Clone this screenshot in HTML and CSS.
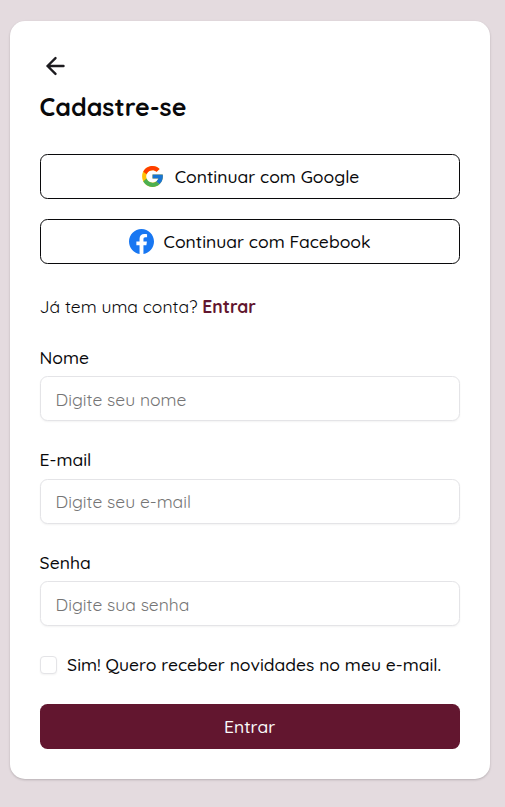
FILE: index.html
```
<!DOCTYPE html>
<html lang="pt-BR">
<head>
<meta charset="utf-8">
<meta name="viewport" content="width=device-width, initial-scale=1">
<title>Cadastre-se</title>
<link rel="stylesheet" href="styles.css">
</head>
<body>
<main class="card">
  <button class="back" type="button" aria-label="Voltar">
    <svg width="24" height="24" viewBox="0 0 24 24" fill="none" stroke="#1c1b1f" stroke-width="2.400" stroke-linecap="round" stroke-linejoin="round"><path d="M20.500 12H4.500M12.500 4.100L4.500 12l8 7.900"/></svg>
  </button>
  <h1 class="title">Cadastre-se</h1>
  <div class="social">
    <button class="social-btn" type="button">
      <svg width="25" height="25" viewBox="0 0 48 48"><path fill="#FFC107" d="M43.611 20.083H42V20H24v8h11.303C33.654 32.657 29.223 36 24 36c-6.627 0-12-5.373-12-12s5.373-12 12-12c3.059 0 5.842 1.154 7.961 3.039l5.657-5.657C34.046 6.053 29.268 4 24 4 12.955 4 4 12.955 4 24s8.955 20 20 20 20-8.955 20-20c0-1.341-.138-2.650-.389-3.917z"/><path fill="#FF3D00" d="M6.306 14.691l6.571 4.819C14.655 15.108 18.961 12 24 12c3.059 0 5.842 1.154 7.961 3.039l5.657-5.657C34.046 6.053 29.268 4 24 4 16.318 4 9.656 8.337 6.306 14.691z"/><path fill="#4CAF50" d="M24 44c5.166 0 9.860-1.977 13.409-5.192l-6.190-5.238C29.211 35.091 26.715 36 24 36c-5.202 0-9.619-3.317-11.283-7.946l-6.522 5.025C9.505 39.556 16.227 44 24 44z"/><path fill="#1976D2" d="M43.611 20.083H42V20H24v8h11.303c-.792 2.237-2.231 4.166-4.087 5.571l6.193 5.238C36.971 39.205 44 34 44 24c0-1.341-.138-2.650-.389-3.917z"/></svg>
      <span>Continuar com Google</span>
    </button>
    <button class="social-btn" type="button">
      <svg width="25" height="25" viewBox="0 0 24 24"><path fill="#1877F2" d="M24 12.073C24 5.405 18.627 0 12 0S0 5.405 0 12.073C0 18.100 4.388 23.094 10.125 24v-8.437H7.078v-3.490h3.047V9.413c0-3.026 1.792-4.697 4.533-4.697 1.312 0 2.686.236 2.686.236v2.971H15.830c-1.491 0-1.956.930-1.956 1.886v2.264h3.328l-.532 3.490h-2.796V24C19.612 23.094 24 18.100 24 12.073z"/></svg>
      <span>Continuar com Facebook</span>
    </button>
  </div>
  <p class="login">Já tem uma conta? <a class="login-link" href="#">Entrar</a></p>
  <form class="form">
    <div class="field">
      <label class="label" for="nome">Nome</label>
      <input class="input" id="nome" type="text" placeholder="Digite seu nome">
    </div>
    <div class="field">
      <label class="label" for="email">E-mail</label>
      <input class="input" id="email" type="email" placeholder="Digite seu e-mail">
    </div>
    <div class="field">
      <label class="label" for="senha">Senha</label>
      <input class="input" id="senha" type="password" placeholder="Digite sua senha">
    </div>
    <label class="news"><input class="check" type="checkbox"><span>Sim! Quero receber novidades no meu e-mail.</span></label>
    <button class="submit" type="button">Entrar</button>
  </form>
</main>
</body>
</html>
```
FILE: styles.css
```
* { box-sizing: border-box; }
body {
  margin: 0;
  padding: 21px 15.4px 28px 9.6px;
  min-height: 807px;
  background: #e4dbdf;
  color: #09090b;
  font: 400 17.5px/25px Quicksand, Lato, sans-serif;
}
button, input { font: inherit; color: inherit; }
.card {
  height: 758px;
  padding: 30px;
  background: #fff;
  border-radius: 15px;
  box-shadow: 0 1px 3px rgba(0, 0, 0, .1), 0 1px 2px rgba(0, 0, 0, .1);
}
.back {
  display: flex;
  align-items: center;
  justify-content: center;
  width: 30px;
  height: 30px;
  padding: 0;
  border: 0;
  background: none;
}
.title {
  margin: 8px 0 29px;
  font-size: 25px;
  line-height: 36px;
  font-weight: 700;
}
.social { display: flex; flex-direction: column; gap: 20px; }
.social-btn {
  display: flex;
  align-items: center;
  justify-content: center;
  gap: 10px;
  height: 45px;
  padding: 0;
  border: 1px solid #09090b;
  border-radius: 7.5px;
  background: #fff;
  font-weight: 500;
}
.login { margin: 30px 0 25.8px; white-space: nowrap; }
.login-link { color: #62162f; font-weight: 700; text-decoration: none; }
.form { display: flex; flex-direction: column; }
.field { height: 102.5px; }
.label { display: block; height: 31.3px; font-weight: 500; }
.input {
  display: block;
  width: 100%;
  height: 45px;
  padding: .5px 15px 0;
  border: 1px solid #e4e4e7;
  border-radius: 7.5px;
  background: #fff;
  box-shadow: 0 1px 2px rgba(0, 0, 0, .05);
}
.input::placeholder { color: #757575; opacity: 1; }
.news {
  display: flex;
  align-items: center;
  gap: 10px;
  height: 25px;
  font-weight: 500;
  white-space: nowrap;
}
.check {
  appearance: none;
  flex: none;
  width: 17.5px;
  height: 18px;
  margin: 0;
  border: 1px solid #e4e4e7;
  border-radius: 4px;
  background: #fff;
  box-shadow: 0 1px 2px rgba(0, 0, 0, .05);
}
.submit {
  height: 45px;
  margin-top: 26.5px;
  padding: 0;
  border: 0;
  border-radius: 7.5px;
  background: #62162f;
  color: #fafafa;
  font-weight: 500;
}
```
